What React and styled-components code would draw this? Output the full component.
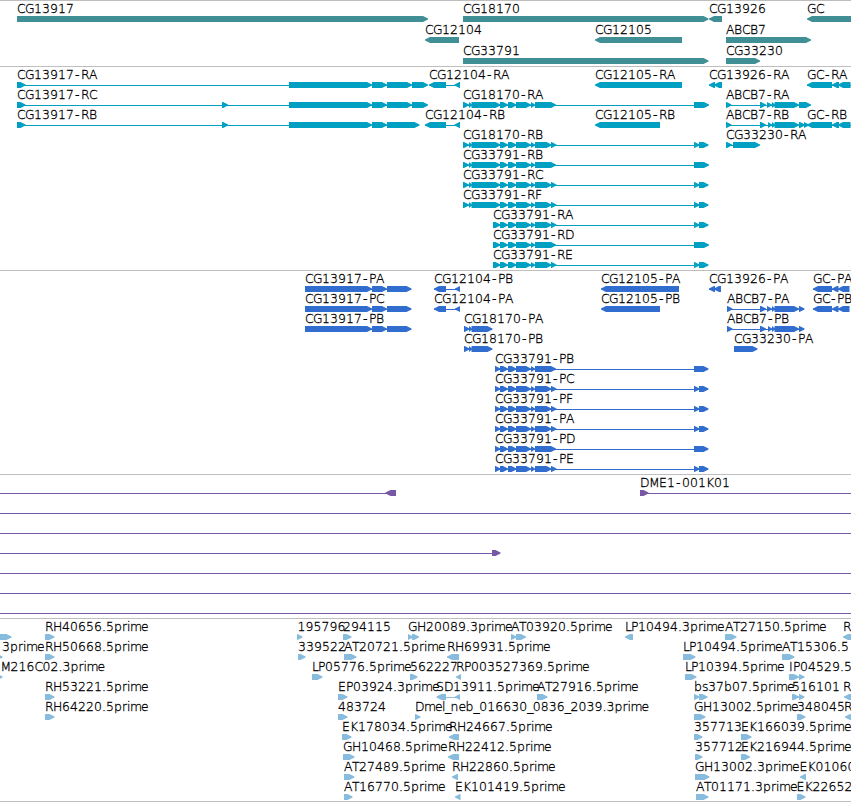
import styled, { createGlobalStyle } from "styled-components";

const GlobalStyle = createGlobalStyle`
  html,
  body {
    margin: 0;
    background: #fff;
    overflow: hidden;
  }
`;

const Browser = styled.main`
  display: flex;
  flex-direction: column;
  width: 851px;
  height: 802px;
  overflow: hidden;
  box-sizing: border-box;
  border-bottom: 1px solid #bebebe;
  background: #fff;
`;

const Track = styled.section`
  display: flex;
  flex-direction: column;
  flex: none;
  border-top: 1px solid #bebebe;
  padding-bottom: ${({ $gap }) => $gap}px;
  color: ${({ $color }) => $color};
`;

const Lane = styled.svg`
  display: block;
  flex: none;
  width: 100%;
  height: ${({ $height }) => $height}px;
  overflow: visible;
`;

const Label = styled.text`
  font-family: "DejaVu Sans Light", "DejaVu Sans", sans-serif;
  font-size: 12.4px;
  font-weight: 200;
  fill: #000;
  stroke: #000;
  stroke-width: 0.3px;
  white-space: pre;
`;

const Glyph = styled.polygon`
  fill: currentColor;
`;

const Intron = styled.rect`
  fill: currentColor;
  shape-rendering: crispEdges;
`;

// advances of the label font in pixels, 8 for anything not listed
const ADVANCE = {
  G: 9, H: 9, M: 10, D: 9, L: 6, P: 7, T: 7, I: 4, F: 7,
  "-": 7, ".": 4, _: 5.6,
  r: 5, i: 3, m: 11, e: 7, l: 3, s: 6,
};

const charPositions = (text, start) => {
  let x = start;
  return [...text]
    .map((c) => {
      // the hyphen sits in the middle of its wide cell
      const at = c === "-" ? x + 1 : x;
      x += ADVANCE[c] || 8;
      return at;
    })
    .join(" ");
};

const fwd = (label, blocks, line) => ({ label, blocks, line, dir: 1 });
const rev = (label, blocks, line) => ({ label, blocks, line, dir: -1 });

const genes = [
  [
    fwd("CG13917", [[17, 428]]),
    fwd("CG18170", [[463, 708.5]]),
    rev("CG13926", [[709, 722]]),
    rev("GC", [[807, 870]]),
  ],
  [
    rev("CG12104", [[425, 459]]),
    rev("CG12105", [[595, 682]]),
    fwd("ABCB7", [[726, 811]]),
  ],
  [fwd("CG33791", [[463, 708.5]]), fwd("CG33230", [[726, 760]])],
];

// exon sets shared between the transcripts
const body13917 = [[289, 372], [372, 387], [387, 412], [412, 428]];
const mid = [[500, 508], [508, 516.5], [516, 531], [531, 535]];
const tailLong = [[535, 556], [694, 709]];
const tailSplit = [[535, 551.5], [551, 556.5], [694, 699.5], [699, 708.5]];
const head = [[463, 469], [469, 472], [471.5, 500.5]];
const gcExons = [[807, 832], [832, 839], [838, 850.5]];

const transcripts = [
  [
    fwd("CG13917-RA", [[17, 25.5], ...body13917]),
    rev("CG12104-RA", [[429, 446], [454.5, 460]]),
    rev("CG12105-RA", [[595, 682]]),
    rev("CG13926-RA", [[709, 715], [714, 722]]),
    rev("GC-RA", gcExons, [807, 860]),
  ],
  [
    fwd("CG13917-RC", [[17, 25.5], [222, 228], ...body13917]),
    fwd("CG18170-RA", [...head, ...mid, ...tailLong]),
    fwd("ABCB7-RA", [[726, 731.5], [760, 766], [767, 772], [772, 775], [774.5, 799], [799, 811]]),
  ],
  [
    fwd("CG13917-RB", [[17, 25.5], [222, 228], [289, 372], [372, 387], [387, 419.5]]),
    rev("CG12104-RB", [[425, 446], [454.5, 460]]),
    rev("CG12105-RB", [[595, 660]]),
    fwd("ABCB7-RB", [[726, 731.5], [760, 766], [768, 772], [772, 775], [774.5, 799], [799, 805], [804, 809]]),
    rev("GC-RB", gcExons, [807, 860]),
  ],
  [
    fwd("CG18170-RB", [...head, ...mid, ...tailSplit]),
    fwd("CG33230-RA", [[726, 732], [733, 760]]),
  ],
  [fwd("CG33791-RB", [...head, ...mid, ...tailLong])],
  [fwd("CG33791-RC", [...head, ...mid, ...tailSplit])],
  [fwd("CG33791-RF", [...head, ...mid, ...tailSplit])],
  [fwd("CG33791-RA", [[493, 500.5], ...mid, ...tailSplit])],
  [fwd("CG33791-RD", [[493, 500.5], ...mid, ...tailLong])],
  [fwd("CG33791-RE", [[493, 500.5], ...mid, ...tailSplit])],
];

const cds13917 = [[305, 372], [372, 387], [387, 411.5]];
const cds12104 = [[434, 446], [455, 460]];
const cds18170 = [[464, 469.5], [469, 472], [471.5, 492.5]];
const cdsGc = [[813, 832], [832, 838.5], [838, 849.5]];

const proteins = [
  [
    fwd("CG13917-PA", cds13917),
    rev("CG12104-PB", cds12104),
    rev("CG12105-PA", [[601, 679]]),
    rev("CG13926-PA", [[709, 715], [714, 721]]),
    rev("GC-PA", cdsGc),
  ],
  [
    fwd("CG13917-PC", cds13917),
    rev("CG12104-PA", cds12104),
    rev("CG12105-PB", [[601, 660]]),
    fwd("ABCB7-PA", [[727, 732.5], [760, 766], [767, 772], [772, 775], [774.5, 799], [799, 804.5]]),
    rev("GC-PB", cdsGc),
  ],
  [
    fwd("CG13917-PB", cds13917),
    fwd("CG18170-PA", cds18170),
    fwd("ABCB7-PB", [[727, 732.5], [760, 766], [768, 772], [772, 775], [774.5, 799], [799, 804.5]]),
  ],
  [fwd("CG18170-PB", cds18170), fwd("CG33230-PA", [[734, 757.5]])],
  [fwd("CG33791-PB", [[495, 500.5], ...mid, [535, 556], [694, 708.5]])],
  [fwd("CG33791-PC", [[495, 500.5], ...mid, ...tailSplit])],
  [fwd("CG33791-PF", [[495, 500.5], ...mid, ...tailSplit])],
  [fwd("CG33791-PA", [[495, 500.5], ...mid, ...tailSplit])],
  [fwd("CG33791-PD", [[495, 500.5], ...mid, [535, 556], [694, 708.5]])],
  [fwd("CG33791-PE", [[495, 500.5], ...mid, ...tailSplit])],
];

const through = () => [fwd("", [], [0, 851])];

const clones = [
  [rev("", [[385.5, 396]], [0, 390]), fwd("DME1-001K01", [[640, 648.5]], [640, 851])],
  through(),
  through(),
  [fwd("", [[492, 500.5]], [0, 496])],
  through(),
  through(),
  through(),
];

const ests = [
  [
    fwd("", [[-5, 11.5]]),
    fwd("RH40656.5prime", [[45, 54.5]]),
    { ...fwd("195796", [[297, 302.5]]), labelX: 297.5 },
    fwd("294115", [[343, 351.5]]),
    fwd("GH20089.3prime", [[408, 413], [412, 419]]),
    fwd("AT03920.5prime", [[511, 516.5], [516, 526]]),
    rev("LP10494.3prime", [[625, 633]]),
    fwd("AT27150.5prime", [[725, 736.5]]),
    rev("R", [[843, 855]]),
  ],
  [
    { ...fwd("3prime", [[-4, 2.5]]), labelX: 2 },
    fwd("RH50668.5prime", [[45, 54.5]]),
    fwd("339522", [[298, 305.5]]),
    fwd("AT20721.5prime", [[344, 356.5]]),
    rev("RH69931.5prime", [[447, 459]]),
    fwd("LP10494.5prime", [[683, 695.5]]),
    fwd("AT15306.5", [[782, 794.5]]),
  ],
  [
    { ...fwd("M216C02.3prime", [[-4, 2.5]]), labelX: 0.5 },
    fwd("LP05776.5prime", [[312, 322.5]]),
    fwd("562227", [[410, 417.5]]),
    rev("RP003527369.5prime", [[456, 461]]),
    fwd("LP10394.5prime", [[685, 696.5]]),
    fwd("IP04529.5", [[789, 799], [799, 804.5]]),
  ],
  [
    fwd("RH53221.5prime", [[45, 54.5]]),
    fwd("EP03924.3prime", [[338, 347.5]]),
    rev("SD13911.5prime", [[436.5, 446], [455, 460]]),
    fwd("AT27916.5prime", [[537, 547.5]]),
    fwd("bs37b07.5prime", [[694, 699.5], [699, 707.5]]),
    fwd("516101", [[792, 799], [799, 804.5]]),
    { ...rev("R", [[844, 856]]), labelX: 843 },
  ],
  [
    fwd("RH64220.5prime", [[45, 54.5]]),
    fwd("483724", [[338, 347.5]]),
    fwd("Dmel_neb_016630_0836_2039.3prime", [[415, 420.5]]),
    fwd("GH13002.5prime", [[694, 705.5]]),
    fwd("348045", [[797, 805.5]]),
    { ...rev("R", [[845, 857]]), labelX: 844 },
  ],
  [
    fwd("EK178034.5prime", [[342, 351.5]]),
    rev("RH24667.5prime", [[449, 459]]),
    fwd("357713", [[694, 702.5]]),
    fwd("EK166039.5prime", [[741, 751.5]]),
  ],
  [
    fwd("GH10468.5prime", [[343, 354.5]]),
    rev("RH22412.5prime", [[448, 459]]),
    fwd("357712", [[695, 702.5]]),
    fwd("EK216944.5prime", [[741, 750]]),
  ],
  [
    fwd("AT27489.5prime", [[344, 354.5]]),
    rev("RH22860.5prime", [[452, 458]]),
    fwd("GH13002.3prime", [[695, 709.5]]),
    { ...rev("EK01060", [[800, 806]]), labelX: 799.5 },
  ],
  [
    fwd("AT16770.5prime", [[344, 352.5]]),
    rev("EK101419.5prime", [[455, 460.5]]),
    fwd("AT01171.3prime", [[696, 708.5]]),
    { ...fwd("EK22652", [[797, 805.5]]), labelX: 796.5 },
  ],
];

const tracks = [
  { id: "genes", color: "#408f94", lane: 21, gap: 2, lanes: genes },
  { id: "transcripts", color: "#00a0c2", lane: 20, gap: 3, lanes: transcripts },
  { id: "proteins", color: "#316dce", lane: 20, gap: 3, lanes: proteins },
  { id: "clones", color: "#7758a6", lane: 20, gap: 3, lanes: clones },
  { id: "ests", color: "#88bcde", lane: 20, gap: 2, lanes: ests },
];

// bar with a blunt head; short blocks are all head
const arrowPoints = (from, to, dir) => {
  const [tail, nose] = dir > 0 ? [from, to] : [to, from];
  const headLength = Math.min(5, to - from);
  const neck = nose - dir * headLength;
  const cheek = nose - dir * headLength * 0.4;
  return [
    [tail, 15],
    [neck, 15],
    [cheek, 16.4],
    [nose, 17.6],
    [nose, 18.6],
    [cheek, 19.6],
    [neck, 21],
    [tail, 21],
  ]
    .map((p) => p.join(","))
    .join(" ");
};

const Feature = ({ label, labelX, blocks, line, dir }) => {
  const start = blocks.length ? blocks[0][0] : 0;
  const span =
    line || (blocks.length > 1 ? [start, blocks[blocks.length - 1][1] - 1] : null);

  return (
    <g>
      {span && <Intron x={span[0]} y={18} width={span[1] - span[0]} height={1} />}
      {blocks.map(([from, to]) => (
        <Glyph key={from} points={arrowPoints(from, to, dir)} />
      ))}
      {label && (
        <Label x={charPositions(label, labelX ?? Math.floor(start))} y={12}>
          {label}
        </Label>
      )}
    </g>
  );
};

const App = () => (
  <>
    <GlobalStyle />
    <Browser>
      {tracks.map(({ id, color, lane, gap, lanes }) => (
        <Track key={id} $color={color} $gap={gap}>
          {lanes.map((features, i) => (
            <Lane key={i} $height={lane}>
              {features.map((feature, n) => (
                <Feature key={n} {...feature} />
              ))}
            </Lane>
          ))}
        </Track>
      ))}
    </Browser>
  </>
);

export default App;
